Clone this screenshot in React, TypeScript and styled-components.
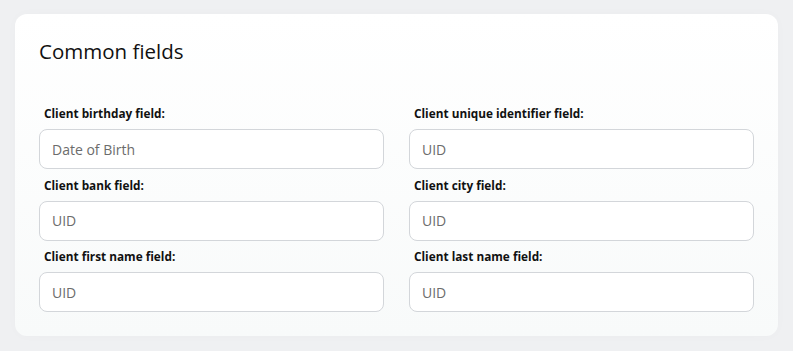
import React from "react";
import styled, { createGlobalStyle } from "styled-components";

const Global = createGlobalStyle`
  html, body { margin: 0; padding: 0; }
  body {
    background: #eff0f2;
    font-family: "Open Sans", "Noto Sans", sans-serif;
    color: #111;
  }
`;

const Page = styled.div`
  padding: 14px 15px 15px 15px;
  box-sizing: border-box;
  width: 793px;
  height: 351px;
`;

const Card = styled.section`
  background: linear-gradient(180deg, #ffffff 0%, #f8fafa 100%);
  border-radius: 12px;
  padding: 24px;
  box-sizing: border-box;
  height: 322px;
  box-shadow: 0 0 12px rgba(0, 0, 0, 0.02);
`;

const Title = styled.h2`
  margin: 0 0 40px 0;
  font-size: 20.5px;
  line-height: 27px;
  font-weight: 400;
  color: #111;
`;

const Grid = styled.div`
  display: grid;
  grid-template-columns: 1fr 1fr;
  column-gap: 25px;
  row-gap: 7.5px;
`;

const Field = styled.label`
  display: flex;
  flex-direction: column;
`;

const LabelText = styled.span`
  font-size: 11.8px;
  line-height: 16px;
  font-weight: 700;
  color: #111;
  padding-left: 5px;
  margin-bottom: 8px;
`;

const Input = styled.input`
  height: 40px;
  box-sizing: border-box;
  border: 1px solid #d3d6da;
  border-radius: 8px;
  background: #fff;
  padding: 0 12px;
  font-family: "Open Sans", "Noto Sans", sans-serif;
  font-size: 14px;
  color: #333;
  outline: none;
  &::placeholder { color: #6c6c6c; opacity: 1; }
`;

const fields = [
  { label: "Client birthday field:", placeholder: "Date of Birth" },
  { label: "Client unique identifier field:", placeholder: "UID" },
  { label: "Client bank field:", placeholder: "UID" },
  { label: "Client city field:", placeholder: "UID" },
  { label: "Client first name field:", placeholder: "UID" },
  { label: "Client last name field:", placeholder: "UID" },
];

export default function App() {
  return (
    <>
      <Global />
      <Page>
        <Card>
          <Title>Common fields</Title>
          <Grid>
            {fields.map((f) => (
              <Field key={f.label}>
                <LabelText>{f.label}</LabelText>
                <Input placeholder={f.placeholder} />
              </Field>
            ))}
          </Grid>
        </Card>
      </Page>
    </>
  );
}
